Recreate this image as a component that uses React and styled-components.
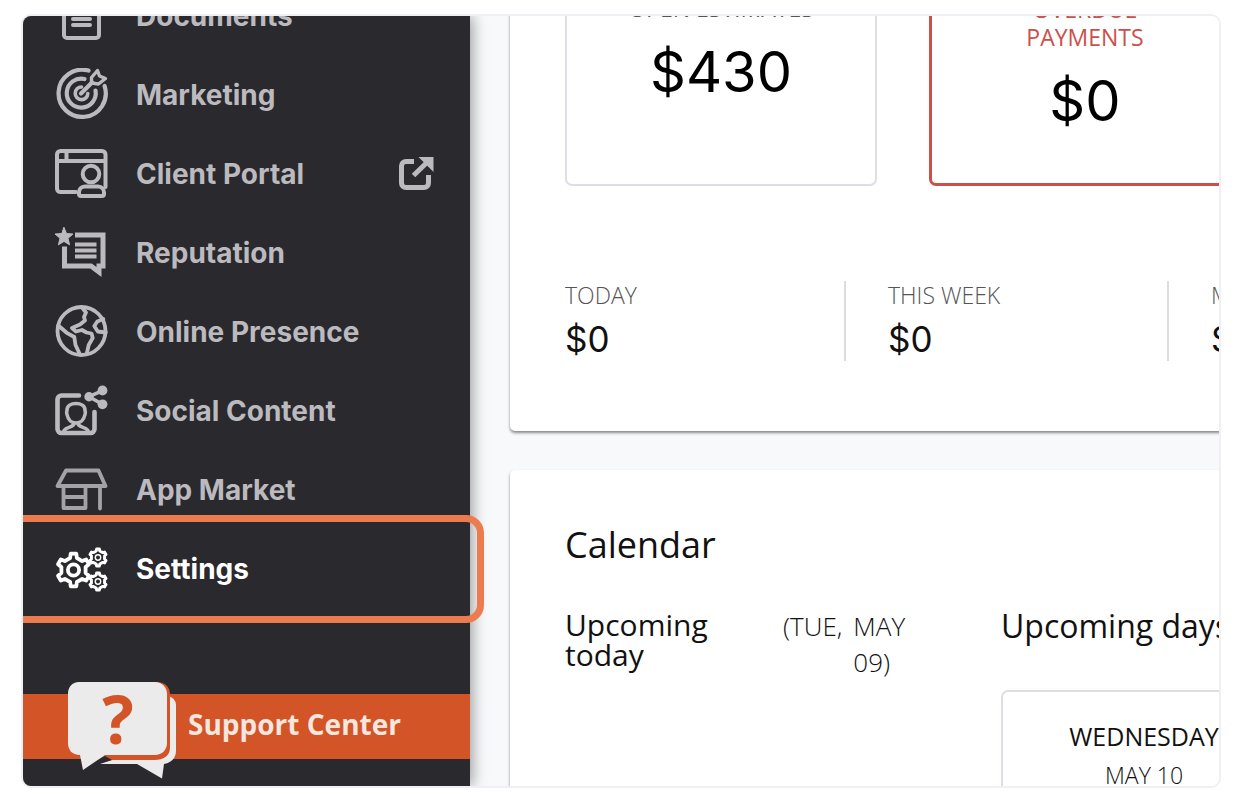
import styled, { createGlobalStyle } from 'styled-components'

const colors = {
    sidebar: '#2a292e',
    navText: '#bbbabe',
    orange: '#d35427',
    highlight: '#ec7b4f',
    page: '#f8f9fb',
    border: '#dcdee8',
    danger: '#cb504a',
    bubble: '#ebebeb',
}

const fonts = {
    heading: '"Inter", sans-serif',
    body: '"Open Sans", "Noto Sans", sans-serif',
}

const GlobalStyle = createGlobalStyle`
    * {
        box-sizing: border-box;
    }
    body {
        margin: 0;
        background: #fff;
        font-family: ${fonts.body};
        color: #111;
    }
    h2, h3, p, ul {
        margin: 0;
        padding: 0;
        font-weight: 400;
    }
    svg {
        display: block;
        flex-shrink: 0;
    }
`

const Frame = styled.div`
    display: flex;
    height: calc(100vh - 30px);
    margin: 14px 23px 16px 21px;
    border: 2px solid #f0f0f4;
    border-radius: 10px;
    overflow: hidden;
`

const Sidebar = styled.aside`
    position: relative;
    z-index: 1;
    flex: 0 0 447px;
    background: ${colors.sidebar};
    box-shadow: 2px 0 14px rgba(0, 0, 0, 0.4);
`

const NavList = styled.ul`
    list-style: none;
    margin-top: -40px;
`

const NavLink = styled.a`
    position: relative;
    display: flex;
    align-items: center;
    gap: 27px;
    height: 79px;
    padding: 0 36px 0 32px;
    font-family: ${fonts.heading};
    font-size: 28px;
    font-weight: 700;
    color: ${(props) => (props.$active ? '#fff' : colors.navText)};
    text-decoration: none;
`

const NavLabel = styled.span`
    flex: 1;
    white-space: nowrap;
`

const Highlight = styled.span`
    position: absolute;
    inset: -14px -14px -15px -20px;
    border: 7px solid ${colors.highlight};
    border-radius: 18px;
`

const SupportLink = styled.a`
    display: flex;
    align-items: center;
    gap: 11px;
    height: 65px;
    margin-top: 86px;
    padding-left: 44px;
    background: ${colors.orange};
    color: #f5e6df;
    font-size: 28px;
    font-weight: 700;
    text-decoration: none;
    white-space: nowrap;
`

const SupportLabel = styled.span`
    padding-bottom: 6px;
`

const Main = styled.main`
    flex: 1;
    min-width: 0;
    padding-left: 40px;
    background: ${colors.page};
`

const Card = styled.section`
    width: max-content;
    min-width: 100%;
    padding: ${(props) => props.$padding};
    background: #fff;
    border-radius: 5px;
    box-shadow: 0 2px 3px rgba(0, 0, 0, 0.45);
`

const MoneyCard = styled(Card)`
    margin: -116px 0 39px;
`

const Boxes = styled.div`
    display: grid;
    grid-template-columns: repeat(2, 312px);
    gap: 52px;
`

const Box = styled.div`
    padding: 52px 70px;
    border: ${(props) => (props.$danger ? `3px solid ${colors.danger}` : `2px solid ${colors.border}`)};
    border-radius: 7px;
    text-align: center;
`

const BoxLabel = styled.h3`
    font-size: 23px;
    line-height: 28px;
    color: ${(props) => (props.$danger ? colors.danger : '#555')};
    margin: 0 -20px 20px;
`

const BoxAmount = styled.p`
    font-family: ${fonts.heading};
    font-size: 56px;
    line-height: 60px;
    color: #000;
`

const Periods = styled.div`
    display: flex;
    gap: 42px;
    margin-top: 95px;
`

const Period = styled.div`
    width: 281px;
    border-right: 2px solid #dcdcdf;
`

const PeriodLabel = styled.h3`
    font-size: 23px;
    font-weight: 300;
    line-height: 28px;
    color: #555;
    margin-bottom: 8px;
`

const PeriodAmount = styled.p`
    font-family: ${fonts.heading};
    font-size: 35px;
    line-height: 44px;
`

const Title = styled.h2`
    font-size: 36px;
    line-height: 44px;
    margin-bottom: 41px;
`

const CalendarColumns = styled.div`
    display: flex;
    gap: 96px;
`

const TodayHeader = styled.div`
    display: flex;
    align-items: baseline;
    justify-content: space-between;
    width: 340px;
`

const TodayTitle = styled.h3`
    width: 150px;
    font-size: 30px;
    line-height: 30px;
`

const TodayDate = styled.p`
    display: flex;
    gap: 11px;
    width: 122px;
    font-size: 26px;
    font-weight: 300;
    line-height: 36px;
`

const DaysTitle = styled.h3`
    font-size: 32px;
    line-height: 36px;
    margin-bottom: 46px;
    white-space: nowrap;
`

const DayBox = styled.div`
    width: 286px;
    height: 200px;
    padding-top: 26px;
    border: 2px solid ${colors.border};
    border-radius: 7px;
    text-align: center;
    line-height: 36px;
`

const DayName = styled.p`
    font-size: 25px;
    margin-bottom: 3px;
`

const DayDate = styled.p`
    font-size: 23px;
    font-weight: 300;
`

const Icon = ({ children, width = 4 }) => (
    <svg width="54" height="54" viewBox="0 0 54 54" fill="none" stroke="currentColor" strokeWidth={width} strokeLinecap="round" strokeLinejoin="round" aria-hidden="true">
        {children}
    </svg>
)

// outline of a cog: each tooth is two outer points followed by two inner ones
const cog = (cx, cy, outer, inner, teeth) => {
    const step = (Math.PI * 2) / teeth
    const points = []
    for (let i = 0; i < teeth; i++) {
        const mid = i * step - Math.PI / 2
        const spots = [[outer, -0.16], [outer, 0.16], [inner, 0.26], [inner, 0.74]]
        spots.forEach(([r, t]) => {
            points.push(`${(cx + r * Math.cos(mid + t * step)).toFixed(1)} ${(cy + r * Math.sin(mid + t * step)).toFixed(1)}`)
        })
    }
    return `M${points.join('L')}Z`
}

const DocumentsIcon = () => (
    <Icon>
        <rect x="9" y="3" width="35" height="46" rx="3" />
        <path d="M18 24h17M18 30h17M18 36h17" />
    </Icon>
)

const MarketingIcon = () => (
    <Icon width={4.2}>
        <path d="M33.5 2.6A23.6 23.600 0 1 0 49.600 18" />
        <path d="M29.500 11A14.500 14.500 0 1 0 40.500 22.500" />
        <path d="M26.500 19a6.300 6.300 0 1 0 6.300 6.500" strokeWidth="3.600" />
        <path d="M26 25.500 37 14.500" />
        <path d="M36.500 15V9.500L42.500 2.500 44.500 8 50.500 10.500 43.500 16Z" strokeWidth="3.400" />
    </Icon>
)

const PortalIcon = () => (
    <Icon width={4}>
        <path d="M21 45H5.500A3.500 3.500 0 0 1 2 41.500V7.500A3.500 3.500 0 0 1 5.500 4H47a3.500 3.500 0 0 1 3.500 3.500V40M2 14H50.500M11.500 5v9" />
        <circle cx="36" cy="27" r="8.300" />
        <path d="M30 39.500h13c4 0 6 3 6 6V47a2 2 0 0 1-2 2H26a2 2 0 0 1-2-2v-1.500c0-3 2-6 6-6Z" fill={colors.sidebar} />
    </Icon>
)

const ReputationIcon = () => (
    <Icon width={4}>
        <path d="m9 1.500 2.500 6 6.500.5-5 4.300 1.600 6.500L9 15.400l-5.600 3.400L5 12.300 0 8l6.500-.500Z" fill="currentColor" stroke="currentColor" strokeWidth="1" />
        <path d="M20 9h28v31h-4v6l-8-6H9.500V20.500" strokeWidth="5" strokeLinecap="butt" strokeLinejoin="miter" />
        <path d="M20 18.500h21.500M20 24.500h21.500M20 30.500h21.500" strokeWidth="3.800" strokeLinecap="butt" />
    </Icon>
)

const GlobeIcon = () => (
    <Icon width={3.8}>
        <circle cx="26.500" cy="26" r="24" />
        <path d="M27 2.500l4 5-2 4.500 1 3.500-5 4-8 3.500 4 3.500 6-1.500 4.500 2.500 5 1 1.200 4.500-4 7-2 9" />
        <path d="m3.300 20.500 8.400 7.300 7.600 4.200 1.200 8 4.500 9.500M48.300 14l-6 2.500-3 4.500 3.500 5.500 8 1" />
    </Icon>
)

const SocialIcon = () => (
    <Icon width={4.600}>
        <path d="M24 11.500H6.500A4 4 0 0 0 2.500 15.500V45a4 4 0 0 0 4 4h29a4 4 0 0 0 4-4V28" />
        <path d="M21 19.500c5 0 9 2.500 9 6.500 0 1.500 1 3 0 4.500-1 5-4.500 8.500-9 8.500s-8-3.500-9-8.500c-1-1.500 0-3 0-4.500 0-4 4-6.500 9-6.500ZM19 39c0 5-7 3-10 7.500M23 39c0 5 7 3 10 7.500" strokeWidth="3.600" />
        <path d="M47.500 6.700 34 12.700l13.500 7.600" strokeWidth="3.600" />
        <g fill="currentColor" stroke="none">
            <circle cx="34" cy="12.700" r="4.700" />
            <circle cx="47.500" cy="6.500" r="4.900" />
            <circle cx="47.500" cy="20.300" r="4.900" />
        </g>
    </Icon>
)

const MarketIcon = () => (
    <Icon width={3.8}>
        <path d="M11 7.500h32.500L50.500 23H2.500ZM8.500 23v22h22V23M8.500 34h22M45 23v22.500" stroke="#a3a2a7" />
    </Icon>
)

const SettingsIcon = () => (
    <Icon width={3.8}>
        <path d={cog(18.500, 28, 16.500, 12.500, 6)} />
        <circle cx="18.500" cy="28" r="5.600" />
        <path d={cog(43, 15.500, 8.500, 6.800, 6)} strokeWidth="3" />
        <circle cx="43" cy="15.500" r="2.700" strokeWidth="1.400" />
        <path d={cog(43, 39.500, 8.500, 6.800, 6)} strokeWidth="3" />
        <circle cx="43" cy="39.500" r="2.700" strokeWidth="1.400" />
    </Icon>
)

const ExternalIcon = () => (
    <svg width="36" height="36" viewBox="0 0 36 36" fill="none" stroke="currentColor" strokeWidth="5" aria-hidden="true">
        <path d="M16 5.500H8A4.500 4.500 0 0 0 3.500 10v17A4.500 4.500 0 0 0 8 31.500h18a4.500 4.500 0 0 0 4.500-4.500V19" />
        <path d="M15.500 19.500 31 4.500" />
        <path d="M20.500 1H35.500V16Z" fill="currentColor" stroke="none" />
    </svg>
)

const SupportIcon = () => (
    <svg width="110" height="104" viewBox="0 0 110 104" aria-hidden="true">
        <path d="M90 21h10a9 9 0 0 1 9 9v46c0 7-5 12-12 13l-2 14.500L70 89H30V70Z" fill={colors.bubble} />
        <path d="M12 7h78c8 0 13 5 13 12v54c0 8-7 12-15 12H45L20 92Z" fill={colors.orange} />
        <path d="M20 104V90L38 81 45 85 33 89Z" fill={colors.sidebar} />
        <path d="M12 7h76c7 0 12 5 12 12v49c0 7-5 12-12 12H38L16 95l-3-15C5 80 1 75 1 68V19C1 12 5 7 12 7Z" fill={colors.bubble} />
        <text x="51" y="69" fill={colors.orange} fontFamily="Open Sans" fontSize="66" fontWeight="700" textAnchor="middle">?</text>
    </svg>
)

const navItems = [
    { label: 'Documents', icon: DocumentsIcon },
    { label: 'Marketing', icon: MarketingIcon },
    { label: 'Client Portal', icon: PortalIcon, external: true },
    { label: 'Reputation', icon: ReputationIcon },
    { label: 'Online Presence', icon: GlobeIcon },
    { label: 'Social Content', icon: SocialIcon },
    { label: 'App Market', icon: MarketIcon },
    { label: 'Settings', icon: SettingsIcon, active: true },
]

const periods = [
    { label: 'TODAY', amount: '$0' },
    { label: 'THIS WEEK', amount: '$0' },
    { label: 'MONTH', amount: '$0' },
]

const App = () => {
    return (
        <>
            <GlobalStyle />
            <Frame>
                <Sidebar>
                    <nav>
                        <NavList>
                            {navItems.map(({ label, icon: ItemIcon, external, active }) => (
                                <li key={label}>
                                    <NavLink href="#" $active={active}>
                                        <ItemIcon />
                                        <NavLabel>{label}</NavLabel>
                                        {external && <ExternalIcon />}
                                        {active && <Highlight />}
                                    </NavLink>
                                </li>
                            ))}
                        </NavList>
                    </nav>
                    <SupportLink href="#">
                        <SupportIcon />
                        <SupportLabel>Support Center</SupportLabel>
                    </SupportLink>
                </Sidebar>
                <Main>
                    <MoneyCard $padding="40px 55px 70px">
                        <Boxes>
                            <Box>
                                <BoxLabel>OPEN ESTIMATES</BoxLabel>
                                <BoxAmount>$430</BoxAmount>
                            </Box>
                            <Box $danger>
                                <BoxLabel $danger>OVERDUE<br />PAYMENTS</BoxLabel>
                                <BoxAmount>$0</BoxAmount>
                            </Box>
                        </Boxes>
                        <Periods>
                            {periods.map((period) => (
                                <Period key={period.label}>
                                    <PeriodLabel>{period.label}</PeriodLabel>
                                    <PeriodAmount>{period.amount}</PeriodAmount>
                                </Period>
                            ))}
                        </Periods>
                    </MoneyCard>
                    <Card $padding="53px 55px 60px">
                        <Title>Calendar</Title>
                        <CalendarColumns>
                            <TodayHeader>
                                <TodayTitle>Upcoming today</TodayTitle>
                                <TodayDate>
                                    <span>(TUE,</span>
                                    <span>MAY 09)</span>
                                </TodayDate>
                            </TodayHeader>
                            <div>
                                <DaysTitle>Upcoming days</DaysTitle>
                                <DayBox>
                                    <DayName>WEDNESDAY</DayName>
                                    <DayDate>MAY 10</DayDate>
                                </DayBox>
                            </div>
                        </CalendarColumns>
                    </Card>
                </Main>
            </Frame>
        </>
    )
}

export default App
